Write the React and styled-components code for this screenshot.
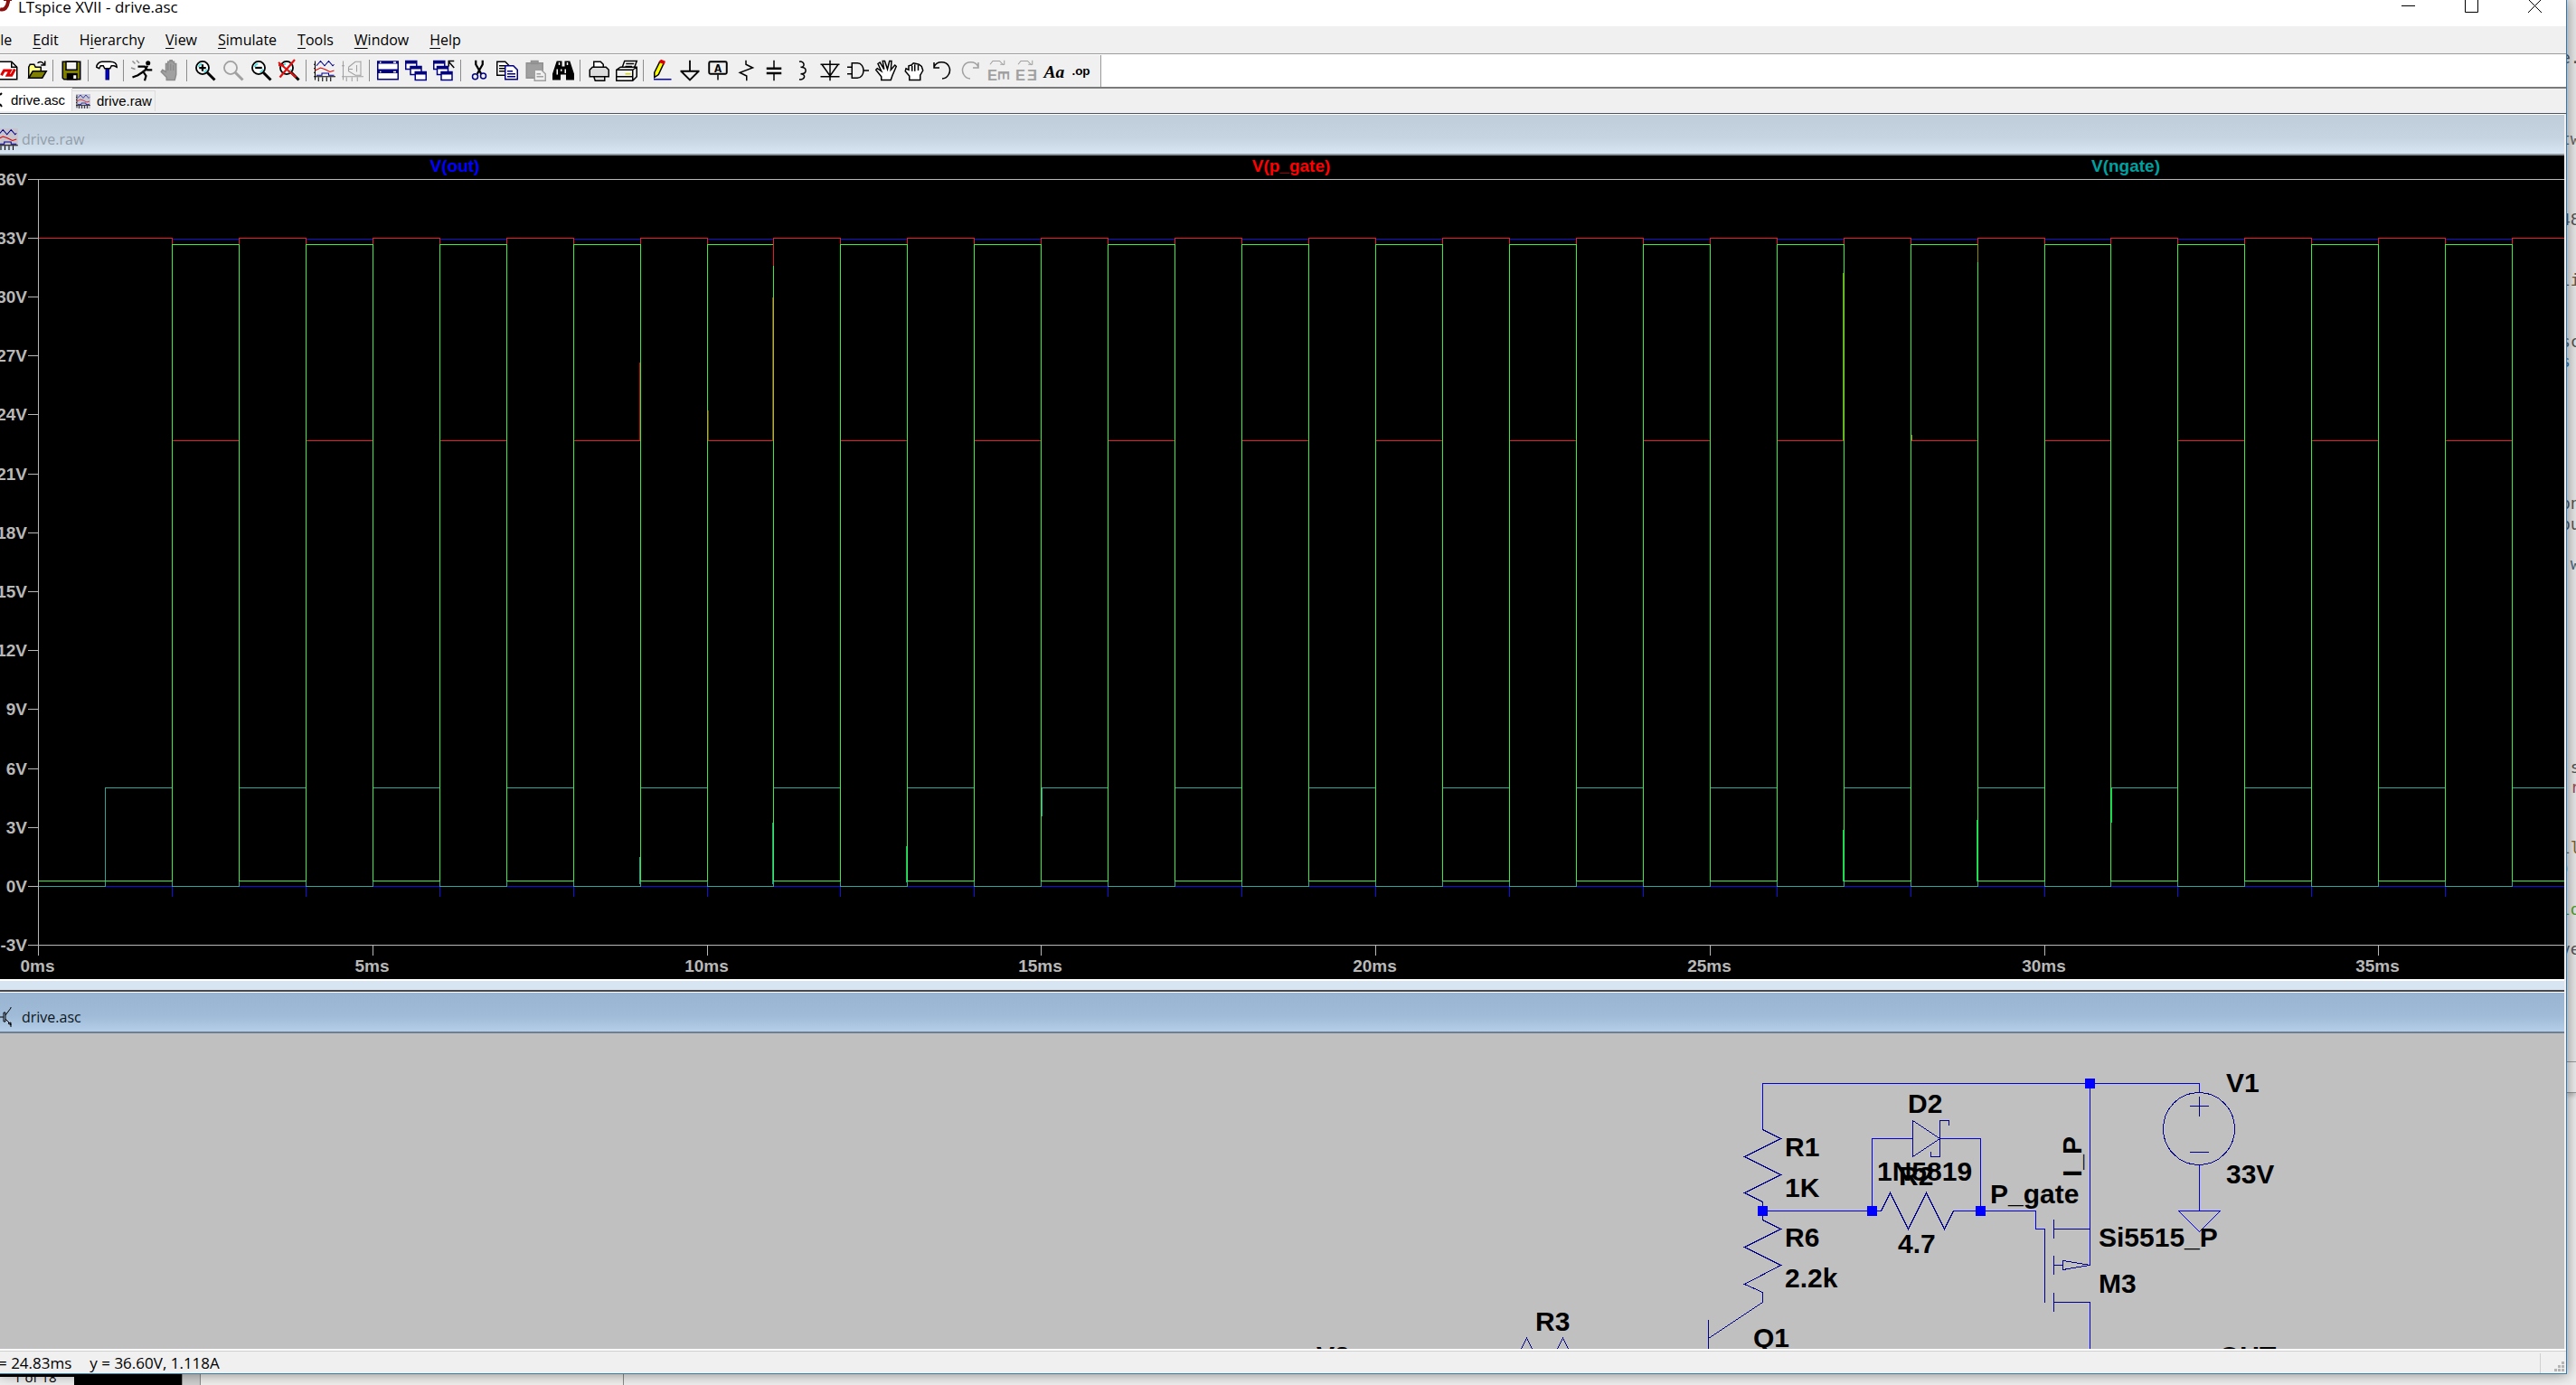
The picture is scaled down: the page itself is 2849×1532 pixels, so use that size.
import React from "react";
import styled, { createGlobalStyle } from "styled-components";

const GlobalStyle = createGlobalStyle`
  * {
    box-sizing: border-box;
  }
  body {
    margin: 0;
    overflow: hidden;
    background: #eeeeee;
    font-family: "Open Sans", "Noto Sans", sans-serif;
    color: #000;
  }
  button {
    padding: 0;
    border: none;
    background: none;
    color: inherit;
    font: inherit;
  }
`;

const Desktop = styled.div`
  display: flex;
  flex-direction: column;
  height: 100vh;
  overflow: hidden;
`;
const Upper = styled.div`
  display: flex;
  flex: 1;
  min-height: 0;
`;
const AppWindow = styled.div`
  display: flex;
  flex-direction: column;
  flex: 1;
  min-width: 0;
  z-index: 1;
  background: #f0f0f0;
  border-right: 1px solid #2a7ab8;
  border-bottom: 1px solid #3a7fa8;
  box-shadow: 0 0 14px rgba(0, 0, 0, 0.45);
`;

/* title bar */
const TitleBar = styled.header`
  display: flex;
  height: 29px;
  background: #fff;
  svg {
    display: block;
  }
`;
const Title = styled.h1`
  flex: 1;
  margin: 0 0 0 6px;
  font-size: 17px;
  line-height: 15px;
  font-weight: 400;
`;
const WindowButton = styled.button`
  display: flex;
  justify-content: center;
  align-items: flex-start;
  width: 70px;
`;

const MenuBar = styled.nav`
  display: flex;
  gap: 23px;
  height: 31px;
  margin-left: -12px;
  border-bottom: 1px solid #9d9d9d;
  font-size: 16px;
  line-height: 31px;
  u {
    text-underline-offset: 3px;
  }
`;

const ToolRow = styled.div`
  display: flex;
  height: 38px;
  border-top: 1px solid #fff;
  border-bottom: 2px solid #7b7b7b;
  background: #fff;
`;
const Toolbar = styled.div`
  display: flex;
  align-items: center;
  padding: 0 5px 2px 0;
  overflow: hidden;
  background: #f0f0f0;
  border-right: 1px solid #9a9a9a;
`;
const ToolButton = styled.button`
  display: flex;
  flex: none;
  justify-content: center;
  align-items: center;
  width: 31px;
  height: 30px;
  &:first-child {
    margin-left: -7px;
  }
`;
const Separator = styled.i`
  flex: none;
  width: 1px;
  height: 24px;
  margin: 0 4px 0 3px;
  background: #8c8c8c;
`;
const Icon = styled.svg`
  display: block;
  flex: none;
  width: ${(p) => p.$size || 24}px;
  height: ${(p) => p.$size || 24}px;
  overflow: visible;
  fill: none;
  stroke: #000;
`;

const Tabs = styled.div`
  display: flex;
  align-items: flex-end;
  height: 28px;
  padding-bottom: 2px;
  border-bottom: 1px solid #4c535c;
`;
const Tab = styled.button`
  display: flex;
  align-items: center;
  height: ${(p) => (p.$active ? 26 : 23)}px;
  gap: 7px;
  padding: 0 ${(p) => (p.$active ? 7 : 3)}px 0 ${(p) => (p.$active ? 0 : 4)}px;
  background: ${(p) => (p.$active ? "#fff" : "#f0f0f0")};
  border: 1px solid #dcdcdc;
  border-width: 1px 1px 0 0;
  font-family: "Liberation Sans", Arial, sans-serif;
  font-size: 15px;
  line-height: 20px;
`;

/* MDI child windows */
const Workspace = styled.main`
  display: flex;
  flex-direction: column;
  flex: 1;
  min-height: 0;
  margin-right: 2px;
`;
const Child = styled.section`
  display: flex;
  flex-direction: column;
  flex: ${(p) => (p.$grow ? "1 1 0" : "none")};
  min-height: 0;
`;
const ChildTitle = styled.h2`
  display: flex;
  align-items: center;
  gap: 4px;
  height: 46px;
  margin: 0;
  padding-top: 11px;
  border-top: 1px solid #fff;
  border-bottom: 2px solid ${(p) => (p.$active ? "#6f7f90" : "#8d959c")};
  background: ${(p) =>
    p.$active
      ? "linear-gradient(#98b4d1, #a0bbd7 60%, #b4cee9)"
      : "linear-gradient(#bfcddb, #c6d4e2 60%, #d8e5f2)"};
  color: ${(p) => (p.$active ? "#0c1620" : "#929ea9")};
  font-size: 16px;
  line-height: 24px;
  font-weight: 400;
`;
const Splitter = styled.div`
  height: 14px;
  border-top: 2px solid #fff;
  border-bottom: 2px solid #46464c;
  background: #d7e4f1;
`;
const Plot = styled.svg`
  display: block;
  width: 100%;
  height: 911px;
  background: #000;
  fill: none;
  text {
    font: bold 19px "Liberation Sans", Arial, sans-serif;
    fill: #b8b8b8;
  }
`;
const Schematic = styled.svg`
  display: block;
  flex: 1;
  width: 100%;
  min-height: 0;
  background: #c0c0c0;
  fill: none;
  text {
    font: bold 30px "Liberation Sans", Arial, sans-serif;
    fill: #000;
  }
`;

const StatusBar = styled.footer`
  display: flex;
  align-items: stretch;
  gap: 20px;
  height: 27px;
  border-top: 2px solid #fff;
  box-shadow: inset 0 1px #cfcfcf;
  font-size: 17px;
  line-height: 28px;
  white-space: pre;
  span:first-child {
    margin-left: -2px;
  }
`;
const Grip = styled.div`
  display: flex;
  justify-content: flex-end;
  align-items: flex-end;
  width: 29px;
  margin: 3px 0 0 auto;
  padding: 0 2px 2px 0;
  border-left: 1px solid #d0d0d0;
`;

/* what shows from behind the window */
const Behind = styled.aside`
  display: flex;
  flex-direction: column;
  width: 10px;
  overflow: hidden;
  background: #eeeeee;
`;
const Code = styled.div`
  display: flex;
  flex-direction: column;
  height: 1175px;
  padding-top: 8px;
  background: #e8e8e8;
  border-bottom: 1px solid #999;
`;
const CodeLine = styled.code`
  flex: 1;
  margin-left: -7px;
  font: 18px/22px "DejaVu Sans Mono", monospace;
  white-space: pre;
  color: ${(p) => p.$color || "#555"};
`;
const PanelHead = styled.div`
  height: 34px;
  border-bottom: 1px solid #999;
  box-shadow: 0 3px 5px #bbb;
`;
const Under = styled.div`
  display: flex;
  height: 12px;
  overflow: hidden;
  background: #eeeeee;
`;
const Pager = styled.div`
  width: 82px;
  padding-left: 15px;
  border-top: 3px solid #000;
  background: #eee;
  font-size: 15px;
  line-height: 0;
`;
const Block = styled.div`
  width: ${(p) => p.$w}px;
  background: ${(p) => p.$bg};
  border-right: 1px solid #8a8a8a;
`;

const Wave = () => (
  <g strokeWidth="0.7">
    <path d="M1 1v14M0 3.5h1M0 6.5h1M0 9.5h1M0 12.5h16M3.5 13v3M6.5 13v3M9.5 13v3M12.5 13v3" />
    <path stroke="#000090" d="M2 4.5l3-3.5 3 3.5 3-3.5 3 3.5 1-1M2 11.5h4v-1.5h5v1.5h4" />
    <path stroke="#e00000" d="M1 8l4-2 3 1 4 2 3-1" />
  </g>
);
const Lens = ({ gray }) => (
  <>
    <circle cx="6" cy="6" r="4.7" fill={gray ? "#f0f0f0" : "#fff"} stroke={gray ? "#a0a0a0" : "#000"} strokeWidth="1.2" />
    {!gray && <path stroke="#40e0e0" d="M3 5.5a3.5 3.5 0 0 1 2.5-2.5M7 9.2a3.5 3.5 0 0 0 2.2-2.2" />}
    <path stroke={gray ? "#a0a0a0" : "#000"} strokeWidth="2" d="M9.5 9.5l5.5 5.5" />
  </>
);
const Pane = ({ x, y }) => (
  <>
    <rect x={x} y={y} width="8" height="6" fill="#fff" stroke="#000080" />
    <path stroke="#000080" strokeWidth="2" d={`M${x} ${y + 1}h8`} />
  </>
);
const Turn = ({ color }) => (
  <path stroke={color} d="M2 5.5c2-5 9-4.500 11-.5c2 4-1 9-5 9M2 2v4h4" />
);

const tools = [
  ["New", <><path fill="#fff" d="M1.5 1.5h9l4 4v9h-13z" /><path d="M10.5 1.5v4h4" /><path stroke="#e00000" strokeWidth="2" d="M3 11.5l2-3.500h4.500l-2 3.500h3l2.500-4.500" /></>],
  ["Open", <><path fill="#ffff80" d="M2.500 13.500v-8l1-2h3l1 2h4v3" /><path fill="#808000" d="M2.500 13.500l3-5h10l-3 5z" /><path d="M9 2.500c2-1.500 4-1 5 1.500M11.500 4h3v-3" /></>],
  null,
  ["Save", <><path fill="#808000" d="M1.500 1.500h13v13h-12l-1-1z" /><path fill="#f4f4f4" d="M4 1.500h8v6h-8z" /><path fill="#000" d="M5 10.500h7v4h-7z" /><path stroke="none" fill="#fff" d="M9.500 11.500h2v2.500h-2z" /></>],
  null,
  ["Control Panel", <><path fill="#0000e0" stroke="#000080" d="M7.500 6.500h2v8h-2z" /><path fill="#fff" d="M.5 5.500c0-2 2-4 4-4h6c3 0 5 1 5 4l-2-1h-2l-1 2h-4l-1-2h-2l-1 2z" /></>],
  null,
  ["Run", <><circle cx="12.500" cy="2.500" r="1.200" fill="#000" /><path strokeWidth="1.500" d="M12 4.500l-2 4M5 5h5l2 2.500h3.500M10 8l-2 1.500-3 2-4 1.500M9 9l2 3-1 3.500" /><path stroke="#909090" d="M1 1l2 2M4 .5l2 2M0 6l3 1" /></>],
  ["Halt", <path fill="#a0a0a0" stroke="#8c8c8c" d="M5.500 15v-2l-4-4 1-1.500 2.500 1.500v-6h1.500v-1.500h1.500v-1h1.500v1h1.500v1.500h1.500v8l-1 4zM6.500 3v5M8.500 3v5M10.500 4v4" />],
  null,
  ["Zoom In", <><Lens /><path strokeWidth="1.500" d="M3.500 6h5M6 3.500v5" /></>],
  ["Pan", <Lens gray />],
  ["Zoom Out", <><Lens /><path strokeWidth="1.500" d="M3.500 6h5" /></>],
  ["Zoom Fit", <><Lens /><path stroke="#e01010" strokeWidth="1.500" d="M0 2l13 11M12 0l-11 13M0 4h4" /></>],
  null,
  ["Autorange", <Wave />],
  ["Eye", <path stroke="#a0a0a0" strokeWidth="0.7" d="M1 1v14M0 12.500h16M3.500 13v3M7.500 13v3M11.500 13v3M0 4.500h2M5 5.500l5-4h4M5 5.500v3l5 3h4M14 1v11M5 7h3M11 4v5" />],
  null,
  ["Tile", <><path fill="#fff" stroke="#000080" d="M.5 1.500h15v6h-15zM.5 8.500h15v6h-15z" /><path stroke="#000080" strokeWidth="2" d="M0 2h16M0 9h16" /><path stroke="#fff" d="M2 2h1M12 2h2M2 9h1M12 9h2" /></>],
  ["Cascade", <><Pane x={0.5} y={1} /><Pane x={4} y={5} /><Pane x={7.5} y={9} /></>],
  ["Close All", <><Pane x={0.5} y={1} /><Pane x={3} y={5} /><Pane x={6} y={9} /><path d="M15.500 6l-4-4.500M11.500 5v-4h4" /></>],
  null,
  ["Cut", <><path strokeWidth="1.500" d="M5.500 0.500v3l4 7M10.500 .5v3l-4 7" /><circle cx="5" cy="12.500" r="2" stroke="#000080" /><circle cx="11" cy="12" r="2" stroke="#000080" /></>],
  ["Copy", <><path fill="#fff" d="M.5 1.500h6l3 3v7h-9z" /><path d="M2 4.500h4M2 6.500h4M2 8.500h4" /><path fill="#fff" stroke="#000080" d="M6.500 4.500h6l3 3v7h-9z" /><path stroke="#000080" d="M8 8.500h4M8 10.500h6M8 12.500h6" /></>],
  ["Paste", <><path fill="#a0a0a0" stroke="#909090" d="M1.500 2.500h12v11h-12zM5 1h5v2h-5z" /><path fill="#f0f0f0" stroke="#a0a0a0" d="M7.500 7.500h5l3 3v5h-8zM9 10.500h3M9 12.500h5" /></>],
  ["Find", <><path fill="#000" d="M3.500 1.500h3v4h3v-4h3l3 9v4h-5v-4h-5v4h-5v-4z" /><path stroke="#fff" d="M5 2v2M11 2v2M3.500 7v4M9.500 7v3M6.500 7v1.500" /></>],
  null,
  ["Print", <><path fill="#fff" d="M4.500 6.500v-5h5l2 2v3" /><path fill="#dcdcdc" d="M1.500 7.500l2-2h10l2 2v5h-14zM4.500 12.500h8v3h-7z" /></>],
  ["Print Setup", <><path fill="#fff" d="M4.500 6.500l2-5.500h9l-2 5.500M7.500 3h6M7 5h5" /><path fill="#f4f4f4" d="M.5 7.500l3-2h12v7l-3 3h-12zM.5 7.500h12v8M12.500 7.500l3-2M.5 12.500h12" /><path stroke="#d8d800" d="M7 10.500h4" /></>],
  null,
  ["Wire", <><path fill="#ffff00" d="M2.500 9.500l4-8 3 1-4 8.500-3 2z" /><path stroke="#e00000" fill="#e00000" d="M6.500 1.500l1-1 2.500 1-.5 1.500z" /><path stroke="#0000c0" d="M2 14.500h13" /></>],
  ["Ground", <path strokeWidth="1.200" d="M8 .5v8M1 8.500h14M1.500 8.500l6.500 6.500 6.500-6.500" />],
  ["Label Net", <><rect x="1.500" y="1.500" width="13" height="9" rx="1" strokeWidth="1.300" /><path d="M8 11v4" /><text x="8" y="9" textAnchor="middle" fill="#000" stroke="none" fontFamily="Liberation Mono" fontWeight="700" fontSize="9">A</text></>],
  ["Resistor", <path d="M8 .5v3l5 2.500-9.500 3.500 5 2.500v3.500" />],
  ["Capacitor", <><path d="M8 .5v6M8 10v5.500" /><path strokeWidth="1.600" d="M2.500 6.500h11M2.500 10h11" /></>],
  ["Inductor", <path d="M6 1.500c3.500-1 5 4 1 4c5 0 5 5 0 5c4.500 0 3 5-1 4" />],
  ["Diode", <path d="M8 .5v15M1 3.500h14M1 12.500h14M2 3.500l6 8.500 6-8.500" />],
  ["Component", <path d="M0 5.500h4M0 10.500h4M3.500 2.500h4c6 0 6 11 0 11h-4zM12 8h4" />],
  ["Move", <path fill="#fff" d="M4.500 15v-2.500l-4-5 1-1 3 2-2.500-5.500 1.500-1 3 5-1-6h1.500l2 6 1.500-6h1.500l-.5 6.500 3-3.500 1 1-3 7-1 3z" />],
  ["Drag", <path fill="#fff" d="M4.500 15v-3l-3-3.500.5-2 2 1v-3l2-.5 1.500-1.500 2 .5 2 .5 2 1.500 1 3-2 3.500v3.500zM6.500 4.500v4M8.500 3.500v5M11 4v4" />],
  ["Undo", <Turn color="#000" />],
  ["Redo", <g transform="matrix(-1 0 0 1 16 0)"><Turn color="#a0a0a0" /></g>],
  ["Rotate", <><path stroke="#a0a0a0" strokeWidth="0.7" d="M2 3.500l2-2.500h5l3 3M9.500 3.500h3v-3" /><g fill="#a0a0a0" stroke="none" fontFamily="Liberation Sans" fontWeight="700" fontSize="11"><text x="0" y="15">E</text><text transform="rotate(90 8 8)" x="8" y="8">E</text></g></>],
  ["Mirror", <><path stroke="#a0a0a0" strokeWidth="0.7" d="M2 3.500l2-2.500h5l3 3M9.500 3.500h3v-3" /><g fill="#a0a0a0" stroke="none" fontFamily="Liberation Sans" fontWeight="700" fontSize="11"><text x="0" y="15">E</text><text transform="matrix(-1 0 0 1 16 0)" x="0" y="15">E</text></g></>],
  ["Text", <text x="8" y="13" textAnchor="middle" fill="#000" stroke="none" fontFamily="Liberation Serif" fontWeight="700" fontStyle="italic" fontSize="13">Aa</text>],
  ["SPICE Directive", <text x="7" y="11" textAnchor="middle" fill="#000" stroke="none" fontFamily="Liberation Sans" fontWeight="700" fontSize="9">.op</text>],
];

const menus = [
  ["F", "ile", ""],
  ["E", "dit", ""],
  ["i", "erarchy", "H"],
  ["V", "iew", ""],
  ["S", "imulate", ""],
  ["T", "ools", ""],
  ["W", "indow", ""],
  ["H", "elp", ""],
];

// plot scales: 1 ms and 1 V in pixels
const px = (ms) => Math.round(42 + ms * 73.95) + 0.5;
const py = (v) => Math.round(808 - v * 21.73) + 0.5;
const END = 38;

const square = (first, low, high, startHigh) => {
  let level = startHigh ? high : low;
  let d = `M${px(0)} ${level}`;
  for (let t = first; t < END; t += 1) {
    level = level === low ? high : low;
    d += `H${px(t)}V${level}`;
  }
  return `${d}H${px(END)}`;
};
const volts = [36, 33, 30, 27, 24, 21, 18, 15, 12, 9, 6, 3, 0, -3];
const millis = [0, 5, 10, 15, 20, 25, 30, 35];
const evens = Array.from({ length: 18 }, (_, i) => 2 + i * 2);
// glitches where two traces land on neighbouring columns: [ms, side, top, bottom, colour]
const glitches = [
  [9, -1, 229, 315, "#c01818"],
  [10, 1, 282, 315, "#c01818"],
  [11, -1, 157, 315, "#e02020"],
  [11, 0, 92, 122, "#e02020"],
  [27, -1, 130, 315, "#8c8c00"],
  [28, 1, 309, 315, "#8c8c00"],
  [29, 0, 98, 118, "#8c8c00"],
  [9, -1, 776, 806, "#20a890"],
  [11, -1, 738, 806, "#20a890"],
  [13, -1, 764, 804, "#10c070"],
  [15, 1, 700, 731, "#20a890"],
  [27, -1, 746, 803, "#00d060"],
  [29, -1, 735, 803, "#00d060"],
  [31, 1, 700, 738, "#00d060"],
];

const PlotPane = () => (
  <Plot viewBox="0 0 2836 911" preserveAspectRatio="xMinYMin slice">
    <g shapeRendering="crispEdges">
      <path stroke="#b8b8b8" d={`M42.5 26.5V885M42 ${26.5}H2836M42 873.5H2836`} />
      {volts.map((v) => (
        <path key={v} stroke="#b8b8b8" d={`M31 ${py(v)}h12`} />
      ))}
      {millis.map((t) => (
        <path key={t} stroke="#b8b8b8" d={`M${px(t)} 873v12`} />
      ))}
      <path stroke="#1010e0" d={square(2, 808.5, 92.5)} />
      <path
        stroke="#1010e0"
        d={evens.map((t) => `M${px(t)} 808v12`).join("")}
      />
      <path stroke="#2fa698" d={square(1, 808.5, 699.5)} />
      <path stroke="#e81c24" d={square(2, 315.5, 91.5, true)} />
      <path stroke="#3cec3c" d={square(2, 802.5, 98.5)} />
      {glitches.map(([t, side, y1, y2, color], i) => (
        <path key={i} stroke={color} d={`M${px(t) + side} ${y1}V${y2}`} />
      ))}
    </g>
    {volts.map((v) => (
      <text key={v} x="30" y={py(v) + 6} textAnchor="end">{`${v}V`}</text>
    ))}
    {millis.map((t) => (
      <text key={t} x={px(t) - 1} y="903" textAnchor="middle">{`${t}ms`}</text>
    ))}
    <g textAnchor="middle">
      <text x="503" y="18" style={{ fill: "#0000ff" }}>V(out)</text>
      <text x="1428" y="18" style={{ fill: "#ff0000" }}>V(p_gate)</text>
      <text x="2351" y="18" style={{ fill: "#00a0a0" }}>V(ngate)</text>
    </g>
  </Plot>
);

const parts = [
  [1974, 136, "R1"],
  [1974, 181, "1K"],
  [1974, 236, "R6"],
  [1974, 281, "2.2k"],
  [2110, 88, "D2"],
  [2076, 163, "1N5819"],
  [2100, 168, "R2"],
  [2099, 243, "4.7"],
  [2201, 188, "P_gate"],
  [2321, 236, "Si5515_P"],
  [2321, 287, "M3"],
  [1939, 347, "Q1"],
  [1698, 329, "R3"],
  [1456, 367, "V2"],
  [2454, 367, "OUT"],
  [2462, 65, "V1"],
  [2462, 166, "33V"],
];
const nodes = [
  [1949, 196],
  [2070, 196],
  [2190, 196],
  [2311, 55],
];

const SchematicPane = () => (
  <Schematic viewBox="0 0 2836 349" preserveAspectRatio="xMinYMin slice">
    <g shapeRendering="crispEdges">
      <path
        stroke="#0000e0"
        d="M1949.5 106.500V55.500H2432.500V65.500M2311.500 55.500V256.500M1949.500 196.500H2080.500M2070.500 196.500V116.500H2115.500M2145.500 116.500H2190.500V196.500M2160.500 196.500H2251.500V216.500H2261.500M2432.500 145.500V196.500M2409.500 196.500H2455.500L2432.500 219.500zM2311.500 297.500V349"
      />
      <g stroke="#000088">
        <path d="M1949.5 106.500l20 10-40 20 40 20-40 20 20 10v20l20 10-40 20 40 20-40 21 20 9v11L1889.500 337.500M1889.500 317V349" />
        <path d="M2080.5 196.500l10-20 20 40 20-40 20 40 10-20" />
        <path d="M2115.5 96.500v40l30-20zM2155.500 102V96.500H2145.500V136.500H2135.500V131" />
        <path d="M2261.5 216V298M2271.500 206V227M2271.500 246V267M2271.500 287V308M2271.500 216.500H2311.500M2271.500 256.500H2281.500M2281.500 251.500v10l30-5zM2271.500 297.500H2311.500" />
        <ellipse cx="2432" cy="105.500" rx="39.500" ry="40" />
        <path d="M2422 80.500h21M2432.500 70v22M2422 131.500h21" />
        <path d="M1682 350l6.500-13 6.500 13M1722 350l6.500-13 6.500 13" />
      </g>
      {nodes.map(([x, y]) => (
        <rect key={x} x={x - 5} y={y - 5} width="11" height="11" fill="#0000ff" />
      ))}
    </g>
    {parts.map(([x, y, name]) => (
      <text key={name} x={x} y={y}>{name}</text>
    ))}
    <text transform="translate(2302 159) rotate(-90)">I_P</text>
  </Schematic>
);

// fragments of the editor behind, by line number
const code = {
  2: ["e.", "#555"],
  6: ["tw", "#666"],
  10: ["48", "#555"],
  13: ["li", "#6b5640"],
  16: ["sc", "#555"],
  17: ["s", "#3070a8"],
  24: ["on", "#555"],
  25: ["ou", "#555"],
  27: [" w", "#4a6880"],
  37: [" s", "#555"],
  38: [" r", "#a05050"],
  41: ["ll", "#806030"],
  42: [")", "#2a6090"],
  44: ["lo", "#55a030"],
  46: ["ve", "#555"],
};

const Transistor = () => (
  <path d="M0 12h4M4 7h2v10h-2zM6 10l6-8v-1M6 14l6 6v3M9 19l3 2v-3z" />
);

const App = () => (
  <Desktop>
    <GlobalStyle />
    <Upper>
      <AppWindow>
        <TitleBar>
          <svg width="14" height="14" viewBox="0 0 14 14" fill="none">
            <path stroke="#8a1010" strokeWidth="4" d="M0 10c5 2 8-2 9-8V0" />
            <path stroke="#8a1010" strokeWidth="2" d="M4 0h9" />
          </svg>
          <Title>LTspice XVII - drive.asc</Title>
          <WindowButton aria-label="Minimize">
            <svg width="15" height="14" viewBox="0 0 15 14" stroke="#000">
              <path d="M0 6.500h15" />
            </svg>
          </WindowButton>
          <WindowButton aria-label="Maximize">
            <svg width="15" height="14" viewBox="0 0 15 14" stroke="#000" fill="none">
              <path d="M.5 0v13.500h14V0" />
            </svg>
          </WindowButton>
          <WindowButton aria-label="Close">
            <svg width="15" height="14" viewBox="0 0 15 14" stroke="#000">
              <path d="M0 -1l15 15M15 -1l-15 15" />
            </svg>
          </WindowButton>
        </TitleBar>
        <MenuBar>
          {menus.map(([key, rest, before]) => (
            <button key={rest}>
              {before}
              <u>{key}</u>
              {rest}
            </button>
          ))}
        </MenuBar>
        <ToolRow>
          <Toolbar role="toolbar">
            {tools.map((tool, i) =>
              tool ? (
                <ToolButton key={i} aria-label={tool[0]}>
                  <Icon viewBox="0 0 16 16">{tool[1]}</Icon>
                </ToolButton>
              ) : (
                <Separator key={i} />
              )
            )}
          </Toolbar>
        </ToolRow>
        <Tabs>
          <Tab $active>
            <svg width="5" height="18" viewBox="0 0 5 18" stroke="#000">
              <path d="M0 3l2-2M0 13l2 3" strokeWidth="2" />
            </svg>
            drive.asc
          </Tab>
          <Tab>
            <Icon $size={16} viewBox="0 0 16 16">
              <rect width="16" height="16" fill="#c9c9d6" stroke="none" />
              <Wave />
            </Icon>
            drive.raw
          </Tab>
        </Tabs>
        <Workspace>
          <Child>
            <ChildTitle>
              <svg width="20" height="24" viewBox="0 0 13 16" fill="none" stroke="#000">
                <rect width="13" height="13" fill="#c8c4cc" stroke="none" />
                <g transform="translate(-3 0)">
                  <Wave />
                </g>
              </svg>
              drive.raw
            </ChildTitle>
            <PlotPane />
          </Child>
          <Splitter />
          <Child $grow>
            <ChildTitle $active>
              <svg width="20" height="24" viewBox="0 0 20 24" fill="none" stroke="#000">
                <Transistor />
              </svg>
              drive.asc
            </ChildTitle>
            <SchematicPane />
          </Child>
        </Workspace>
        <StatusBar>
          <span>= 24.83ms</span>
          <span>y = 36.60V, 1.118A</span>
          <Grip>
            <svg width="11" height="11" viewBox="0 0 11 11" fill="#b4b4b4">
              <path d="M8 0h3v3h-3zM4 4h3v3h-3zM8 4h3v3h-3zM0 8h3v3h-3zM4 8h3v3h-3zM8 8h3v3h-3z" />
            </svg>
          </Grip>
        </StatusBar>
      </AppWindow>
      <Behind>
        <Code>
          {Array.from({ length: 52 }, (_, i) => (
            <CodeLine key={i} $color={code[i] && code[i][1]}>
              {code[i] ? code[i][0] : " "}
            </CodeLine>
          ))}
        </Code>
        <PanelHead />
      </Behind>
    </Upper>
    <Under>
      <Pager>1 of 18</Pager>
      <Block $w={120} $bg="#000" />
      <Block $w={20} $bg="#cfcfcf" />
      <Block $w={468} $bg="#f0efee" />
    </Under>
  </Desktop>
);

export default App;
